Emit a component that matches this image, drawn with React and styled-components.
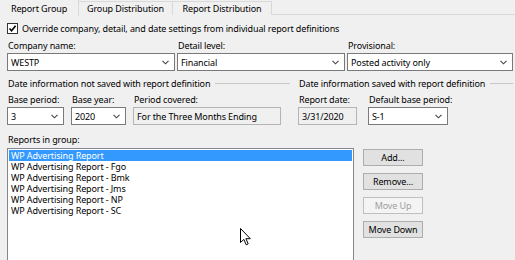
import React from "react";
import styled, { createGlobalStyle } from "styled-components";

const Global = createGlobalStyle`
  html, body { margin: 0; padding: 0; background: #f0f0f0; }
  body {
    font-family: "Noto Sans", "Open Sans", sans-serif;
    font-size: 9px;
    letter-spacing: -0.12px;
    color: #000;
  }
`;

const Window = styled.div`
  position: relative;
  width: 515px;
  height: 260px;
  overflow: hidden;
  background: #f0f0f0;
`;

const TabStrip = styled.div`
  display: flex;
  height: 15px;
  border-bottom: 1px solid #d9d9d9;
  box-sizing: border-box;
`;

const Tab = styled.div`
  box-sizing: border-box;
  width: ${(p) => p.w}px;
  height: ${(p) => (p.active ? 16 : 14)}px;
  margin-top: ${(p) => (p.active ? 0 : 1)}px;
  display: flex;
  align-items: center;
  justify-content: center;
  background: #f0f0f0;
  border-right: 1px solid #d9d9d9;
  border-top: ${(p) => (p.active ? "none" : "1px solid #d9d9d9")};
`;

const Page = styled.div`
  padding: 0 2px 0 7px;
`;

const CheckRow = styled.label`
  display: flex;
  align-items: center;
  gap: 4px;
  height: 11px;
  margin-top: 8px;
`;

const CheckBox = styled.span`
  box-sizing: border-box;
  width: 11px;
  height: 11px;
  border: 1px solid #333;
  background: #fff;
  display: flex;
  align-items: center;
  justify-content: center;
`;

const TopGrid = styled.div`
  display: grid;
  grid-template-columns: 168px 168px 166px;
  column-gap: 2px;
  margin-top: 6px;
`;

const Field = styled.div`
  display: flex;
  flex-direction: column;
  width: ${(p) => (p.w ? `${p.w}px` : "auto")};
`;

const Label = styled.div`
  height: 12px;
  line-height: 12px;
  padding-left: 1px;
  margin-bottom: ${(p) => (p.gapBelow != null ? p.gapBelow : 1)}px;
  margin-top: ${(p) => p.gapAbove || 0}px;
  white-space: nowrap;
`;

const Box = styled.div`
  box-sizing: border-box;
  height: 18px;
  border: 1px solid ${(p) => (p.readOnly ? "#b4b4b4" : "#7a7a7a")};
  background: ${(p) => (p.readOnly ? "#f0f0f0" : "#fff")};
  display: flex;
  align-items: center;
  padding: 0 5px 0 3px;
  white-space: nowrap;
  overflow: hidden;
`;

const BoxText = styled.span`
  flex: 1;
`;

const Sections = styled.div`
  display: grid;
  grid-template-columns: 283px 215px;
  column-gap: 8px;
  margin-top: 5px;
`;

const SectionHead = styled.div`
  display: flex;
  align-items: center;
  gap: 5px;
  height: 14px;
  padding-left: 1px;
  white-space: nowrap;
  &::after {
    content: "";
    flex: 1;
    height: 1px;
    background: #c8c8c8;
  }
`;

const FieldRow = styled.div`
  display: flex;
  gap: ${(p) => p.gap || 7}px;
  margin-top: 4px;
`;

const ListArea = styled.div`
  display: flex;
  gap: 9px;
  margin-top: 2px;
`;

const ListBox = styled.div`
  box-sizing: border-box;
  width: 347px;
  height: 130px;
  border: 1px solid #828790;
  background: #fff;
  padding: 1px;
`;

const Item = styled.div`
  height: 11px;
  line-height: 11px;
  overflow: hidden;
  padding-left: 2px;
  white-space: nowrap;
  background: ${(p) => (p.selected ? "#3399ff" : "transparent")};
  color: ${(p) => (p.selected ? "#fff" : "#000")};
`;

const Buttons = styled.div`
  display: flex;
  flex-direction: column;
  gap: 7px;
  margin-top: 1px;
`;

const Button = styled.button`
  box-sizing: border-box;
  width: 60px;
  height: 17px;
  padding: 0;
  font: inherit;
  letter-spacing: inherit;
  background: ${(p) => (p.disabled ? "#f4f4f4" : "#e1e1e1")};
  border: 1px solid ${(p) => (p.disabled ? "#bfbfbf" : "#adadad")};
  color: ${(p) => (p.disabled ? "#a0a0a0" : "#000")};
`;

const Cursor = styled.svg`
  position: absolute;
  left: 240px;
  top: 228px;
`;

const Chevron = () => (
  <svg width="7" height="5" viewBox="0 0 7 5">
    <path d="M0.5 0.8 L3.5 3.8 L6.5 0.8" fill="none" stroke="#444" strokeWidth="1.1" />
  </svg>
);

const Select = ({ value }) => (
  <Box>
    <BoxText>{value}</BoxText>
    <Chevron />
  </Box>
);

const reports = [
  "WP Advertising Report",
  "WP Advertising Report - Fgo",
  "WP Advertising Report - Bmk",
  "WP Advertising Report - Jms",
  "WP Advertising Report - NP",
  "WP Advertising Report - SC",
];

export default function App() {
  return (
    <Window>
      <Global />
      <TabStrip>
        <Tab active w={79}>Report Group</Tab>
        <Tab w={94}>Group Distribution</Tab>
        <Tab w={99}>Report Distribution</Tab>
      </TabStrip>
      <Page>
        <CheckRow>
          <CheckBox>
            <svg width="9" height="9" viewBox="0 0 9 9">
              <path d="M1.5 4.5 L3.6 6.8 L7.6 1.8" fill="none" stroke="#000" strokeWidth="1.6" />
            </svg>
          </CheckBox>
          Override company, detail, and date settings from individual report definitions
        </CheckRow>

        <TopGrid>
          <Field>
            <Label>Company name:</Label>
            <Select value="WESTP" />
          </Field>
          <Field>
            <Label>Detail level:</Label>
            <Select value="Financial" />
          </Field>
          <Field>
            <Label>Provisional:</Label>
            <Select value="Posted activity only" />
          </Field>
        </TopGrid>

        <Sections>
          <div>
            <SectionHead>Date information not saved with report definition</SectionHead>
            <FieldRow>
              <Field w={57}>
                <Label>Base period:</Label>
                <Select value="3" />
              </Field>
              <Field w={55}>
                <Label>Base year:</Label>
                <Select value="2020" />
              </Field>
              <Field w={148}>
                <Label>Period covered:</Label>
                <Box readOnly>For the Three Months Ending</Box>
              </Field>
            </FieldRow>
          </div>
          <div>
            <SectionHead>Date information saved with report definition</SectionHead>
            <FieldRow gap={11}>
              <Field w={59}>
                <Label>Report date:</Label>
                <Box readOnly>3/31/2020</Box>
              </Field>
              <Field w={80}>
                <Label>Default base period:</Label>
                <Select value="S-1" />
              </Field>
            </FieldRow>
          </div>
        </Sections>

        <Label gapAbove={9} gapBelow={2}>Reports in group:</Label>
        <ListArea>
          <ListBox>
            {reports.map((r, i) => (
              <Item key={r} selected={i === 0}>{r}</Item>
            ))}
          </ListBox>
          <Buttons>
            <Button>Add...</Button>
            <Button>Remove...</Button>
            <Button disabled>Move Up</Button>
            <Button>Move Down</Button>
          </Buttons>
        </ListArea>
      </Page>
      <Cursor width="11" height="18" viewBox="0 0 11 18">
        <path d="M0.5 0.5 L0.5 14.5 L3.8 11.4 L6.2 16.8 L8.2 15.9 L5.9 10.7 L10.3 10.7 Z" fill="#fff" stroke="#000" strokeWidth="1" />
      </Cursor>
    </Window>
  );
}
